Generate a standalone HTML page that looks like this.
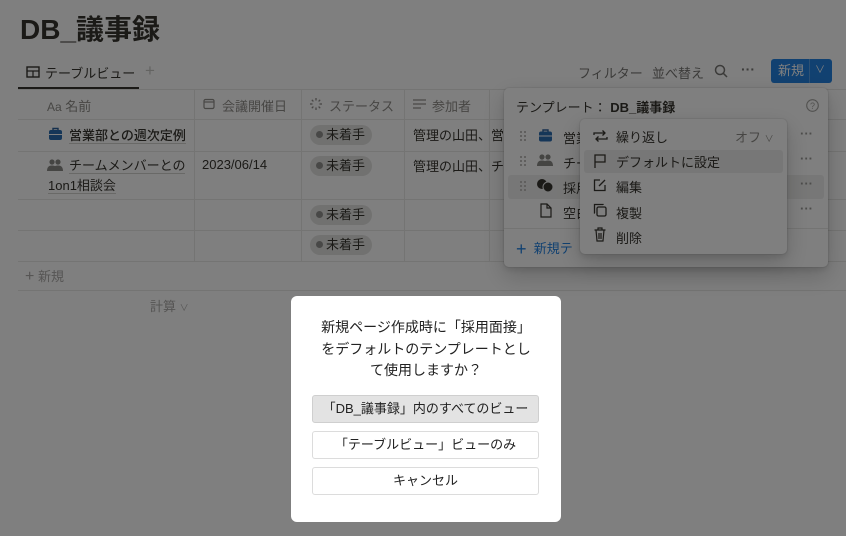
<!DOCTYPE html>
<html><head><meta charset="utf-8"><style>
*{box-sizing:border-box;margin:0;padding:0}
body{width:846px;height:536px;overflow:hidden;background:#fff;font-family:"Liberation Sans","Noto Sans CJK JP",sans-serif;color:#37352f;position:relative;font-size:13px}
.a{position:absolute;white-space:nowrap}
.g{color:#8f8d89}
.hl{position:absolute;height:1px;background:#e9e9e7}
.vl{position:absolute;width:1px;background:#e9e9e7}
.pill{position:absolute;left:310px;width:62px;height:20px;border-radius:10px;background:#e3e2e0;font-size:13px;line-height:20px;padding-left:6px}
.pill:before{content:"";display:inline-block;width:7px;height:7px;border-radius:50%;background:#91918e;margin-right:3px;vertical-align:1px}
.ul{border-bottom:1px solid #d3d2ce}
.pop{position:absolute;background:#fff;border-radius:5px;box-shadow:0 0 0 1px rgba(15,15,15,.05),0 3px 6px rgba(15,15,15,.1),0 9px 24px rgba(15,15,15,.2)}
.ov{position:absolute;left:0;top:0;width:846px;height:536px;background:rgba(0,0,0,.5);z-index:10}
.dlg{position:absolute;left:291px;top:296px;width:270px;height:226px;background:#fff;border-radius:6px;z-index:11}
.btn{position:absolute;left:21px;width:227px;height:28px;border:1px solid #dcdcdc;border-radius:3px;text-align:center;line-height:26px;font-size:13px;color:#222}
.dh{position:absolute;width:6px;height:10px}
.dh:before{content:"";position:absolute;left:0;top:0;width:2px;height:2px;background:#c0bfbc;box-shadow:4px 0 #c0bfbc,0 4px #c0bfbc,4px 4px #c0bfbc,0 8px #c0bfbc,4px 8px #c0bfbc}
</style></head><body>
<div class="a" style="left:20px;top:8px;font-size:28px;font-weight:bold;color:#37352f">DB_議事録</div>

<svg class="a" style="left:26px;top:66px" width="14" height="12"><rect x="1" y="1" width="12" height="10" fill="none" stroke="#37352f" stroke-width="1.4"/><line x1="1" y1="5" x2="13" y2="5" stroke="#37352f" stroke-width="1.2"/><line x1="7" y1="5" x2="7" y2="11" stroke="#37352f" stroke-width="1.2"/></svg>
<div class="a" style="left:45px;top:63px;font-size:13px">テーブルビュー</div>
<div class="a" style="left:145px;top:61px;font-size:17px;color:#c7c6c3">+</div>
<div style="position:absolute;left:18px;top:87px;width:121px;height:2px;background:#37352f"></div>

<div class="a" style="left:578px;top:63px;font-size:13px;color:#787774">フィルター</div>
<div class="a" style="left:652px;top:63px;font-size:13px;color:#787774">並べ替え</div>
<svg class="a" style="left:714px;top:64px" width="14" height="14"><circle cx="6" cy="6" r="4.5" fill="none" stroke="#787774" stroke-width="1.5"/><line x1="9.3" y1="9.3" x2="13" y2="13" stroke="#787774" stroke-width="1.5"/></svg>
<div class="a" style="left:741px;top:61px;font-size:14px;color:#787774;font-weight:bold">···</div>
<div class="a" style="left:771px;top:59px;width:61px;height:24px;background:#2383e2;border-radius:3px;color:#fff;font-size:13px;line-height:24px;padding-left:7px">新規<span style="position:absolute;left:44px;top:0;font-size:10px">∨</span><span style="position:absolute;left:38px;top:0;width:1px;height:24px;background:rgba(255,255,255,.25)"></span></div>

<div class="hl" style="left:18px;top:89px;width:828px"></div>
<div class="hl" style="left:18px;top:119px;width:828px"></div>
<div class="hl" style="left:18px;top:151px;width:828px"></div>
<div class="hl" style="left:18px;top:199px;width:828px"></div>
<div class="hl" style="left:18px;top:230px;width:828px"></div>
<div class="hl" style="left:18px;top:261px;width:828px"></div>
<div class="hl" style="left:18px;top:290px;width:828px"></div>
<div class="vl" style="left:194px;top:89px;height:172px"></div>
<div class="vl" style="left:301px;top:89px;height:172px"></div>
<div class="vl" style="left:404px;top:89px;height:172px"></div>
<div class="vl" style="left:489px;top:89px;height:172px"></div>

<div class="a g" style="left:47px;top:96px;font-size:13px"><span style="font-size:12px">Aa</span> 名前</div>
<svg class="a" style="left:203px;top:98px" width="12" height="12"><rect x="1" y="1.5" width="10" height="9" rx="1.5" fill="none" stroke="#8f8d89" stroke-width="1.2"/><line x1="1" y1="4" x2="11" y2="4" stroke="#8f8d89" stroke-width="1.2"/></svg>
<div class="a g" style="left:222px;top:96px">会議開催日</div>
<svg class="a" style="left:309px;top:97px" width="14" height="14" stroke="#8f8d89" stroke-width="1.3"><line x1="7" y1="1" x2="7" y2="3.5"/><line x1="7" y1="10.5" x2="7" y2="13"/><line x1="1" y1="7" x2="3.5" y2="7"/><line x1="10.5" y1="7" x2="13" y2="7"/><line x1="2.8" y1="2.8" x2="4.4" y2="4.4"/><line x1="9.6" y1="9.6" x2="11.2" y2="11.2"/><line x1="2.8" y1="11.2" x2="4.4" y2="9.6"/><line x1="9.6" y1="4.4" x2="11.2" y2="2.8"/></svg>
<div class="a g" style="left:329px;top:96px">ステータス</div>
<svg class="a" style="left:413px;top:99px" width="13" height="10" stroke="#8f8d89" stroke-width="1.2"><line x1="0" y1="1" x2="13" y2="1"/><line x1="0" y1="5" x2="13" y2="5"/><line x1="0" y1="9" x2="8" y2="9"/></svg>
<div class="a g" style="left:432px;top:96px">参加者</div>

<svg class="a" style="left:48px;top:126px" width="15" height="15"><path d="M5 4V2.5h5V4" fill="none" stroke="#2b5e9a" stroke-width="1.4"/><rect x="1" y="4" width="13" height="10" rx="2" fill="#2b6cb0"/><line x1="1" y1="8.5" x2="14" y2="8.5" stroke="#fff" stroke-width="1"/></svg>
<div class="a" style="left:69px;top:125px;font-weight:500;font-size:13px"><span class="ul">営業部との週次定例</span></div>
<div class="pill" style="top:125px">未着手</div>
<div class="a" style="left:413px;top:125px">管理の山田、営業</div>

<svg class="a" style="left:47px;top:158px" width="16" height="14" fill="#8b8a86"><circle cx="5" cy="4" r="2.6"/><circle cx="11" cy="4" r="2.6"/><path d="M0 13c0-4 2-5.5 5-5.5s5 1.5 5 5.5z"/><path d="M6 13c0-4 2-5.5 5-5.5s5 1.5 5 5.5z"/></svg>
<div class="a" style="left:69px;top:155px;line-height:21px"><span class="ul">チームメンバーとの</span></div>
<div class="a" style="left:48px;top:175px;line-height:21px"><span class="ul">1on1相談会</span></div>
<div class="a" style="left:202px;top:157px">2023/06/14</div>
<div class="pill" style="top:156px">未着手</div>
<div class="a" style="left:413px;top:156px">管理の山田、チー</div>
<div class="pill" style="top:205px">未着手</div>
<div class="pill" style="top:235px">未着手</div>

<div class="a" style="left:25px;top:266px;font-size:13px;color:#acaba9"><span style="font-size:16px">+</span> 新規</div>
<div class="a" style="left:150px;top:296px;color:#acaba9">計算 <span style="font-size:9px">∨</span></div>

<div class="pop" style="left:504px;top:88px;width:324px;height:179px">
 <div class="a" style="left:12px;top:9px;font-size:13px">テンプレート： <b>DB_議事録</b></div>
 <svg class="a" style="left:302px;top:11px" width="13" height="13"><circle cx="6.5" cy="6.5" r="5.8" fill="none" stroke="#a5a4a1" stroke-width="1.1"/><text x="6.5" y="9.8" font-size="9" text-anchor="middle" fill="#a5a4a1" font-family="Liberation Sans">?</text></svg>
 <div style="position:absolute;left:4px;top:87px;width:316px;height:24px;background:#efefee;border-radius:3px"></div>
 <div class="dh" style="left:16px;top:43px"></div>
 <div class="dh" style="left:16px;top:68px"></div>
 <div class="dh" style="left:16px;top:93px"></div>
 <svg class="a" style="left:34px;top:40px" width="15" height="14"><path d="M5 3.5V2h5v1.5" fill="none" stroke="#2b5e9a" stroke-width="1.4"/><rect x="1" y="3.5" width="13" height="10" rx="2" fill="#2b6cb0"/><line x1="1" y1="8" x2="14" y2="8" stroke="#fff" stroke-width="1"/></svg>
 <svg class="a" style="left:33px;top:65px" width="16" height="14" fill="#8b8a86"><circle cx="5" cy="4" r="2.6"/><circle cx="11" cy="4" r="2.6"/><path d="M0 13c0-4 2-5.5 5-5.5s5 1.5 5 5.5z"/><path d="M6 13c0-4 2-5.5 5-5.5s5 1.5 5 5.5z"/></svg>
 <svg class="a" style="left:32px;top:90px" width="18" height="16"><circle cx="6" cy="6" r="5" fill="#37352f"/><circle cx="12" cy="9" r="5" fill="#37352f" stroke="#efefee" stroke-width="1"/></svg>
 <svg class="a" style="left:36px;top:115px" width="12" height="15"><path d="M1 1h6l4 4v9H1z M7 1v4h4" fill="none" stroke="#37352f" stroke-width="1.2"/></svg>
 <div class="a" style="left:59px;top:40px">営業</div>
 <div class="a" style="left:59px;top:65px">チー</div>
 <div class="a" style="left:59px;top:90px">採用</div>
 <div class="a" style="left:59px;top:115px">空白</div>
 <div class="a" style="left:296px;top:38px;font-weight:bold;color:#9b9a97">···</div>
 <div class="a" style="left:296px;top:63px;font-weight:bold;color:#9b9a97">···</div>
 <div class="a" style="left:296px;top:88px;font-weight:bold;color:#9b9a97">···</div>
 <div class="a" style="left:296px;top:113px;font-weight:bold;color:#9b9a97">···</div>
 <div class="hl" style="left:0;top:140px;width:324px"></div>
 <div class="a" style="left:12px;top:150px;color:#2383e2;font-size:13px"><span style="font-size:18px;vertical-align:-2px">+</span>&nbsp; 新規テ</div>
</div>

<div class="pop" style="left:580px;top:119px;width:207px;height:135px">
 <div style="position:absolute;left:4px;top:31px;width:199px;height:23px;background:#efefee;border-radius:3px"></div>
 <svg class="a" style="left:13px;top:10px" width="15" height="14" fill="none" stroke="#37352f" stroke-width="1.3"><path d="M1 6V4h11 M9.5 1.5 12 4 9.5 6.5"/><path d="M14 8v2H3 M5.5 12.5 3 10 5.5 7.5"/></svg>
 <div class="a" style="left:36px;top:8px">繰り返し</div>
 <div class="a" style="left:155px;top:8px;color:#8f8d89">オフ <span style="font-size:9px">∨</span></div>
 <svg class="a" style="left:13px;top:34px" width="14" height="16" fill="none" stroke="#37352f" stroke-width="1.3"><path d="M2 15V2h10v7H2"/></svg>
 <div class="a" style="left:36px;top:33px">デフォルトに設定</div>
 <svg class="a" style="left:13px;top:59px" width="14" height="14" fill="none" stroke="#37352f" stroke-width="1.3"><path d="M7 2H1.5v10.5H12V7"/><path d="M6 8l6-6"/></svg>
 <div class="a" style="left:36px;top:58px">編集</div>
 <svg class="a" style="left:13px;top:84px" width="14" height="14" fill="none" stroke="#37352f" stroke-width="1.3"><rect x="4" y="4" width="9" height="9" rx="1.5"/><path d="M10 2V1.5H1.5V10H2"/></svg>
 <div class="a" style="left:36px;top:84px">複製</div>
 <svg class="a" style="left:14px;top:108px" width="12" height="15" fill="none" stroke="#37352f" stroke-width="1.2"><path d="M0.5 3h11 M4 3V1h4v2 M2 3l1 11h6l1-11 M5 6v6 M7 6v6"/></svg>
 <div class="a" style="left:36px;top:109px">削除</div>
</div>

<div class="ov"></div>

<div class="dlg">
 <div style="position:absolute;left:0;top:21px;width:270px;text-align:center;font-size:14px;line-height:21.5px;color:#222">新規ページ作成時に「採用面接」<br>をデフォルトのテンプレートとし<br>て使用しますか？</div>
 <div class="btn" style="top:99px;background:#e3e3e3;border-color:#cfcfcf">「DB_議事録」内のすべてのビュー</div>
 <div class="btn" style="top:135px;background:#fff">「テーブルビュー」ビューのみ</div>
 <div class="btn" style="top:171px;background:#fff">キャンセル</div>
</div>
</body></html>
